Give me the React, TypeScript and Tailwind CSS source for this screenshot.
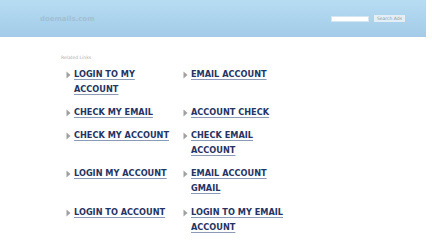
const links: string[] = [
  'LOGIN TO MY ACCOUNT',
  'EMAIL ACCOUNT',
  'CHECK MY EMAIL',
  'ACCOUNT CHECK',
  'CHECK MY ACCOUNT',
  'CHECK EMAIL ACCOUNT',
  'LOGIN MY ACCOUNT',
  'EMAIL ACCOUNT GMAIL',
  'LOGIN TO ACCOUNT',
  'LOGIN TO MY EMAIL ACCOUNT',
];

function Arrow() {
  return (
    <svg width="5" height="8" viewBox="0 0 5 8" className="mt-[3.5px] shrink-0">
      <path d="M0.5 0.5 L4.5 4 L0.5 7.5 Z" fill="#a0a0a0" />
    </svg>
  );
}

export default function App() {
  return (
    <div className="w-[432px] h-[243px] overflow-hidden bg-white font-['DejaVu_Sans',sans-serif]">
      {/* header */}
      <div className="w-[426px] h-[37px] bg-gradient-to-b from-[#b6ddf2] to-[#a3cbe8] flex items-center justify-between pl-[40px] pr-[21px]">
        <span className="text-[7px] font-bold text-[#a2bfd4] mt-[2px]">doemails.com</span>
        <div className="flex items-center gap-[5px]">
          <div className="w-[38px] h-[6px] bg-white border border-[#d6e6f0]" />
          <div className="h-[7px] px-[3px] bg-[#e4eef5] text-[4.5px] leading-[7px] text-[#8a9aa6]">Search Ads</div>
        </div>
      </div>

      {/* related links */}
      <div className="pl-[61px] pt-[18px]">
        <div className="text-[4.5px] leading-[6px] text-[#b0b0b0]">Related Links</div>
        <div className="grid grid-cols-[117px_117px] gap-y-[8px] pl-[5px] pt-[6px]">
          {links.map((t, i) => (
            <div key={t} className={i >= 8 ? 'flex items-start gap-[3px] mt-[1px]' : 'flex items-start gap-[3px]'}>
              <Arrow />
              <a
                href="#"
                className="w-[100px] text-[8.2px] leading-[15px] font-bold text-[#253463] underline decoration-[#8c9ab8] underline-offset-[1.5px]"
              >
                {t}
              </a>
            </div>
          ))}
        </div>
      </div>
    </div>
  );
}
